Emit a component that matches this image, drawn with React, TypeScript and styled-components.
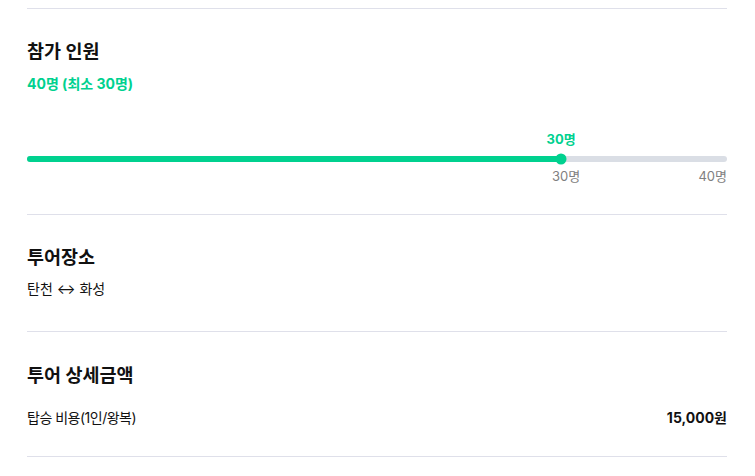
import React from "react";
import styled, { createGlobalStyle } from "styled-components";

const GlobalStyle = createGlobalStyle`
  html, body { margin: 0; padding: 0; background: #ffffff; }
  body {
    font-family: Inter, "Noto Sans CJK KR", "Noto Sans", sans-serif;
    color: #111111;
    -webkit-font-smoothing: antialiased;
  }
`;

const Page = styled.div`
  width: 700px;
  padding: 8px 28px 0 27px;
`;

const Section = styled.section<{ $top: number; $bottom: number }>`
  border-top: 1px solid #dfe0ea;
  padding: ${(p) => p.$top}px 0 ${(p) => p.$bottom}px;
  &:last-child {
    border-bottom: 1px solid #dfe0ea;
  }
`;

const Title = styled.h2`
  margin: 0;
  font-size: 18.5px;
  line-height: 26px;
  font-weight: 700;
  color: #111111;
`;

const Highlight = styled.div`
  margin-top: 10px;
  font-size: 14px;
  line-height: 20px;
  font-weight: 700;
  color: #00d18f;
`;

const Body = styled.div<{ $gap: number }>`
  margin-top: ${(p) => p.$gap}px;
  font-size: 14px;
  line-height: 20px;
  color: #111111;
  display: flex;
  justify-content: space-between;
  align-items: center;
`;

const Label = styled.span`
  letter-spacing: -0.5px;
`;

const Price = styled.span`
  font-weight: 700;
`;

const SliderWrap = styled.div`
  margin-top: 36px;
  display: flex;
  flex-direction: column;
`;

const ValueRow = styled.div`
  position: relative;
  height: 20px;
`;

const ValueBubble = styled.span`
  position: absolute;
  top: 0;
  transform: translateX(-50%);
  font-size: 13px;
  line-height: 18px;
  font-weight: 700;
  color: #00d18f;
`;

const Track = styled.div`
  position: relative;
  margin-top: 6px;
  height: 6px;
  border-radius: 3px;
  background: #dadee5;
`;

const Fill = styled.div`
  height: 100%;
  border-radius: 3px;
  background: #00d18f;
`;

const Thumb = styled.span`
  position: absolute;
  top: 50%;
  width: 11px;
  height: 11px;
  border-radius: 50%;
  background: #00d18f;
  transform: translate(-50%, -50%);
`;

const ScaleRow = styled.div`
  position: relative;
  margin-top: 5px;
  height: 18px;
  font-size: 13px;
  line-height: 18px;
  color: #808080;
`;

const ScaleLabel = styled.span<{ $right?: boolean }>`
  position: absolute;
  top: 0;
  ${(p) => (p.$right ? "right: 0;" : "")}
`;

export default function App() {
  const thumbPct = 76.3;
  const minPct = 75;
  return (
    <>
      <GlobalStyle />
      <Page>
        <Section $top={29} $bottom={29}>
          <Title>참가 인원</Title>
          <Highlight>40명 (최소 30명)</Highlight>
          <SliderWrap>
            <ValueRow>
              <ValueBubble style={{ left: `${thumbPct}%` }}>30명</ValueBubble>
            </ValueRow>
            <Track>
              <Fill style={{ width: `${thumbPct}%` }} />
              <Thumb style={{ left: `${thumbPct}%` }} />
            </Track>
            <ScaleRow>
              <ScaleLabel style={{ left: `${minPct}%` }}>30명</ScaleLabel>
              <ScaleLabel $right>40명</ScaleLabel>
            </ScaleRow>
          </SliderWrap>
        </Section>
        <Section $top={29} $bottom={32}>
          <Title>투어장소</Title>
          <Body $gap={9}>탄천 ↔ 화성</Body>
        </Section>
        <Section $top={30} $bottom={28}>
          <Title>투어 상세금액</Title>
          <Body $gap={20}>
            <Label>탑승 비용(1인/왕복)</Label>
            <Price>15,000원</Price>
          </Body>
        </Section>
      </Page>
    </>
  );
}
